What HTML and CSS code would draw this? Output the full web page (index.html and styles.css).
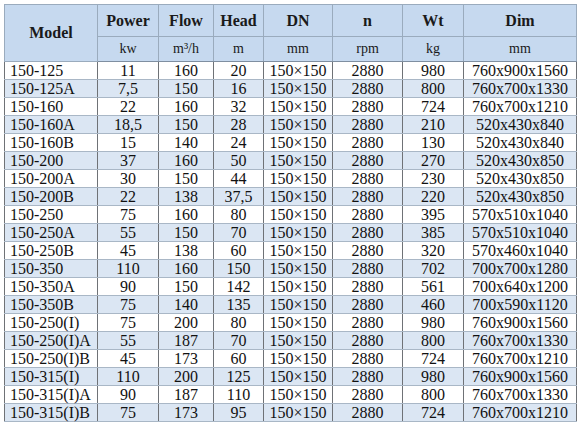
FILE: index.html
```html
<!DOCTYPE html>
<html>
<head>
<meta charset="utf-8">
<link rel="stylesheet" href="styles.css">
</head>
<body>
<table class="spec">
<colgroup>
<col class="c-model"><col class="c-power"><col class="c-flow"><col class="c-head"><col class="c-dn"><col class="c-n"><col class="c-wt"><col class="c-dim">
</colgroup>
<thead>
<tr class="h1"><th rowspan="2">Model</th><th>Power</th><th>Flow</th><th>Head</th><th>DN</th><th>n</th><th>Wt</th><th>Dim</th></tr>
<tr class="h2"><th>kw</th><th>m³/h</th><th>m</th><th>mm</th><th>rpm</th><th>kg</th><th>mm</th></tr>
</thead>
<tbody>
<tr><td>150-125</td><td>11</td><td>160</td><td>20</td><td>150×150</td><td>2880</td><td>980</td><td>760x900x1560</td></tr>
<tr><td>150-125A</td><td>7,5</td><td>150</td><td>16</td><td>150×150</td><td>2880</td><td>800</td><td>760x700x1330</td></tr>
<tr><td>150-160</td><td>22</td><td>160</td><td>32</td><td>150×150</td><td>2880</td><td>724</td><td>760x700x1210</td></tr>
<tr><td>150-160A</td><td>18,5</td><td>150</td><td>28</td><td>150×150</td><td>2880</td><td>210</td><td>520x430x840</td></tr>
<tr><td>150-160B</td><td>15</td><td>140</td><td>24</td><td>150×150</td><td>2880</td><td>130</td><td>520x430x840</td></tr>
<tr><td>150-200</td><td>37</td><td>160</td><td>50</td><td>150×150</td><td>2880</td><td>270</td><td>520x430x850</td></tr>
<tr><td>150-200A</td><td>30</td><td>150</td><td>44</td><td>150×150</td><td>2880</td><td>230</td><td>520x430x850</td></tr>
<tr><td>150-200B</td><td>22</td><td>138</td><td>37,5</td><td>150×150</td><td>2880</td><td>220</td><td>520x430x850</td></tr>
<tr><td>150-250</td><td>75</td><td>160</td><td>80</td><td>150×150</td><td>2880</td><td>395</td><td>570x510x1040</td></tr>
<tr><td>150-250A</td><td>55</td><td>150</td><td>70</td><td>150×150</td><td>2880</td><td>385</td><td>570x510x1040</td></tr>
<tr><td>150-250B</td><td>45</td><td>138</td><td>60</td><td>150×150</td><td>2880</td><td>320</td><td>570x460x1040</td></tr>
<tr><td>150-350</td><td>110</td><td>160</td><td>150</td><td>150×150</td><td>2880</td><td>702</td><td>700x700x1280</td></tr>
<tr><td>150-350A</td><td>90</td><td>150</td><td>142</td><td>150×150</td><td>2880</td><td>561</td><td>700x640x1200</td></tr>
<tr><td>150-350B</td><td>75</td><td>140</td><td>135</td><td>150×150</td><td>2880</td><td>460</td><td>700x590x1120</td></tr>
<tr><td>150-250(I)</td><td>75</td><td>200</td><td>80</td><td>150×150</td><td>2880</td><td>980</td><td>760x900x1560</td></tr>
<tr><td>150-250(I)A</td><td>55</td><td>187</td><td>70</td><td>150×150</td><td>2880</td><td>800</td><td>760x700x1330</td></tr>
<tr><td>150-250(I)B</td><td>45</td><td>173</td><td>60</td><td>150×150</td><td>2880</td><td>724</td><td>760x700x1210</td></tr>
<tr><td>150-315(I)</td><td>110</td><td>200</td><td>125</td><td>150×150</td><td>2880</td><td>980</td><td>760x900x1560</td></tr>
<tr><td>150-315(I)A</td><td>90</td><td>187</td><td>110</td><td>150×150</td><td>2880</td><td>800</td><td>760x700x1330</td></tr>
<tr><td>150-315(I)B</td><td>75</td><td>173</td><td>95</td><td>150×150</td><td>2880</td><td>724</td><td>760x700x1210</td></tr>
</tbody>
</table>
</body>
</html>
```

FILE: styles.css
```css
html, body {
  margin: 0;
  padding: 0;
  background: #ffffff;
}
body {
  padding: 4px 0 0 4px;
  font-family: "Liberation Serif", "Times New Roman", "DejaVu Serif", serif;
  color: #111111;
}
.spec {
  border-collapse: collapse;
  table-layout: fixed;
  width: 572px;
  border: 1px solid #8a96a3;
  font-family: "Liberation Serif", "Times New Roman", "DejaVu Serif", serif;
}
.c-model { width: 93px; }
.c-power { width: 61px; }
.c-flow { width: 55px; }
.c-head { width: 50px; }
.c-dn { width: 69px; }
.c-n { width: 70px; }
.c-wt { width: 61px; }
.c-dim { width: 113px; }
.spec th {
  background: #c6d9ef;
  border: 1px solid #9aabbd;
  font-family: "Liberation Serif", "Times New Roman", "DejaVu Serif", serif;
  font-weight: bold;
  font-size: 16px;
  padding: 0;
  text-align: center;
  color: #1a1a1a;
}
.spec .h1 th { height: 31px; }
.spec .h2 th {
  height: 24px;
  font-weight: normal;
  font-size: 14px;
}
.spec td {
  height: 17px;
  padding: 0;
  font-family: "Liberation Serif", "Times New Roman", "DejaVu Serif", serif;
  font-size: 16px;
  line-height: 17px;
  text-align: center;
  border-left: 1px solid #6f7276;
  border-right: 1px solid #6f7276;
  border-top: 1px solid #a9b7c6;
  border-bottom: 1px solid #a9b7c6;
  white-space: nowrap;
}
.spec td:first-child {
  text-align: left;
  padding-left: 5px;
}
.spec tbody tr:nth-child(even) td {
  background: #dbe6f3;
}
.spec thead .h2 th {
  border-bottom: 1px solid #7f8fa1;
}
```
